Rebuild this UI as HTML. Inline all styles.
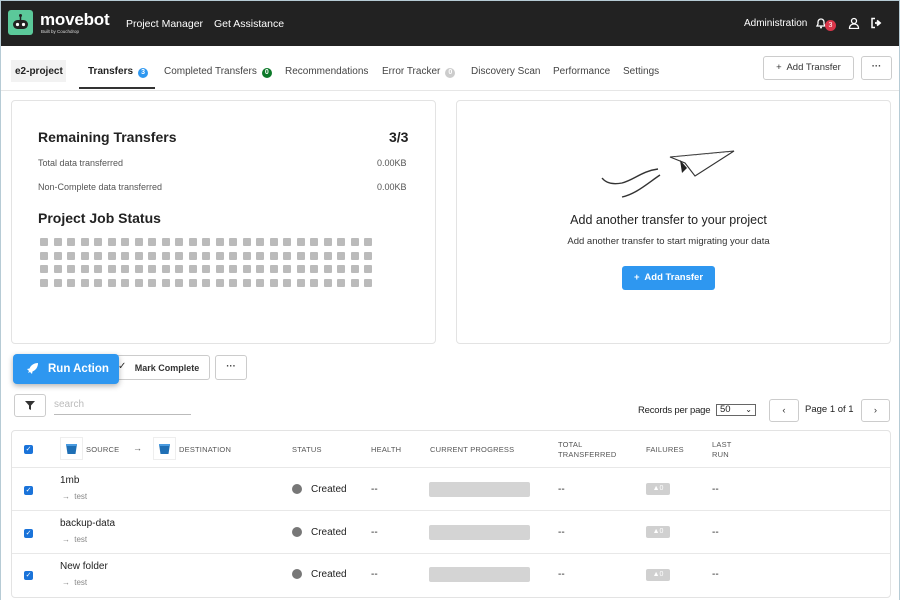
<!DOCTYPE html>
<html><head><style>
*{box-sizing:border-box;margin:0;padding:0}
body{width:900px;height:600px;overflow:hidden;background:#fff;font-family:"Liberation Sans",Arial,sans-serif;position:relative;color:#222}
.a{position:absolute;white-space:nowrap}
.frame{left:0;top:0;width:900px;height:600px;border:1px solid #b6cbd5;border-bottom:none}
.hdr{left:1px;top:1px;width:898px;height:45px;background:#222}
.w{color:#fff;font-size:10.5px}
.tab{font-size:10px;color:#444;top:66px}
.badge{display:inline-block;width:10px;height:10px;border-radius:5px;font-size:7px;color:#fff;text-align:center;line-height:10px;font-weight:bold;vertical-align:0px;margin-left:5px}
.card{border:1px solid #e3e3e3;border-radius:4px;background:#fff}
.btn{border:1px solid #ccc;border-radius:3px;background:#fff;font-size:9.5px;color:#333;text-align:center}
.sq{width:8px;height:8px;background:#bbb;border-radius:1px}
.th{font-size:7.5px;color:#555;letter-spacing:.2px}
.cb{width:9px;height:9px;background:#1a73d9;border-radius:2px;color:#fff;font-size:7px;line-height:9px;text-align:center}
.bar{width:101px;height:15px;background:#d4d4d4;border-radius:2px}
.fail{width:24px;height:12px;background:#d0d0d0;border-radius:2px;color:#fff;font-size:7px;text-align:center;line-height:12px}
.dot{width:10px;height:10px;border-radius:5px;background:#777}
</style></head><body>
<div class="a frame"></div>
<div class="a hdr"></div>
<div class="a" style="left:8px;top:10px;width:25px;height:25px;background:#5bc99a;border-radius:3px"></div>
<svg class="a" style="left:8px;top:10px" width="25" height="25"><rect x="5" y="10" width="15" height="9" rx="4.5" fill="#222"/><circle cx="9.5" cy="14.5" r="1.6" fill="#fff"/><circle cx="15.5" cy="14.5" r="1.6" fill="#fff"/><line x1="12.5" y1="6" x2="12.5" y2="10" stroke="#222" stroke-width="1.5"/><circle cx="12.5" cy="5.5" r="1.5" fill="#222"/></svg>
<div class="a" style="left:40px;top:10px;color:#fff;font-size:17px;font-weight:bold;letter-spacing:-.2px">movebot</div>
<div class="a" style="left:41px;top:29px;color:#ddd;font-size:4.5px">Built by Couchdrop</div>
<div class="a w" style="left:126px;top:18px">Project Manager</div>
<div class="a w" style="left:214px;top:18px">Get Assistance</div>
<div class="a w" style="left:744px;top:18px;font-size:10px">Administration</div>
<svg class="a" style="left:815px;top:17px" width="12" height="12"><path d="M2 9h8l-1-2V5a3 3 0 0 0-6 0v2z" fill="none" stroke="#fff" stroke-width="1.3"/><circle cx="6" cy="10.5" r="1" fill="#fff"/></svg>
<div class="a" style="left:825px;top:20px;width:11px;height:11px;border-radius:6px;background:#d9364a;color:#fff;font-size:7px;text-align:center;line-height:11px">3</div>
<svg class="a" style="left:848px;top:17px" width="12" height="12"><circle cx="6" cy="4" r="2.5" fill="none" stroke="#fff" stroke-width="1.3"/><path d="M1.5 11.5c0-3 2-4.5 4.5-4.5s4.5 1.5 4.5 4.5z" fill="none" stroke="#fff" stroke-width="1.3"/></svg>
<svg class="a" style="left:870px;top:17px" width="12" height="12"><path d="M5 1.5H2v9h3" fill="none" stroke="#fff" stroke-width="1.5"/><path d="M5 6h4M7 3.5 10 6 7 8.5" fill="none" stroke="#fff" stroke-width="1.8"/></svg>

<div class="a" style="left:11px;top:60px;width:55px;height:22px;background:#f2f2f2"></div>
<div class="a" style="left:15px;top:66px;font-size:10px;font-weight:bold">e2-project</div>
<div class="a tab" style="left:88px;font-weight:bold;color:#222">Transfers<span class="badge" style="background:#2e97f0">3</span></div>
<div class="a" style="left:79px;top:87px;width:76px;height:2px;background:#333"></div>
<div class="a tab" style="left:164px">Completed Transfers<span class="badge" style="background:#0d7a2a">0</span></div>
<div class="a tab" style="left:285px">Recommendations</div>
<div class="a tab" style="left:382px">Error Tracker<span class="badge" style="background:#ccc">0</span></div>
<div class="a tab" style="left:471px">Discovery Scan</div>
<div class="a tab" style="left:553px">Performance</div>
<div class="a tab" style="left:623px">Settings</div>
<div class="a btn" style="left:763px;top:56px;width:91px;height:24px;line-height:22px">+&nbsp; Add Transfer</div>
<div class="a btn" style="left:861px;top:56px;width:31px;height:24px;line-height:20px;font-weight:bold">···</div>
<div class="a" style="left:1px;top:90px;width:898px;height:1px;background:#e6e6e6"></div>

<div class="a card" style="left:11px;top:100px;width:425px;height:244px"></div>
<div class="a" style="left:38px;top:129px;font-size:14px;font-weight:bold">Remaining Transfers</div>
<div class="a" style="left:389px;top:129px;font-size:14px;font-weight:bold">3/3</div>
<div class="a" style="left:38px;top:158px;font-size:9px;color:#555">Total data transferred</div>
<div class="a" style="left:377px;top:158px;font-size:9px;color:#555">0.00KB</div>
<div class="a" style="left:38px;top:182px;font-size:9px;color:#555">Non-Complete data transferred</div>
<div class="a" style="left:377px;top:182px;font-size:9px;color:#555">0.00KB</div>
<div class="a" style="left:38px;top:210px;font-size:14px;font-weight:bold">Project Job Status</div>
<div class="a" style="left:40px;top:238px;width:340px;display:grid;grid-template-columns:repeat(25,8px);column-gap:5.5px;row-gap:5.5px">
<div class="sq"></div><div class="sq"></div><div class="sq"></div><div class="sq"></div><div class="sq"></div><div class="sq"></div><div class="sq"></div><div class="sq"></div><div class="sq"></div><div class="sq"></div><div class="sq"></div><div class="sq"></div><div class="sq"></div><div class="sq"></div><div class="sq"></div><div class="sq"></div><div class="sq"></div><div class="sq"></div><div class="sq"></div><div class="sq"></div><div class="sq"></div><div class="sq"></div><div class="sq"></div><div class="sq"></div><div class="sq"></div>
<div class="sq"></div><div class="sq"></div><div class="sq"></div><div class="sq"></div><div class="sq"></div><div class="sq"></div><div class="sq"></div><div class="sq"></div><div class="sq"></div><div class="sq"></div><div class="sq"></div><div class="sq"></div><div class="sq"></div><div class="sq"></div><div class="sq"></div><div class="sq"></div><div class="sq"></div><div class="sq"></div><div class="sq"></div><div class="sq"></div><div class="sq"></div><div class="sq"></div><div class="sq"></div><div class="sq"></div><div class="sq"></div>
<div class="sq"></div><div class="sq"></div><div class="sq"></div><div class="sq"></div><div class="sq"></div><div class="sq"></div><div class="sq"></div><div class="sq"></div><div class="sq"></div><div class="sq"></div><div class="sq"></div><div class="sq"></div><div class="sq"></div><div class="sq"></div><div class="sq"></div><div class="sq"></div><div class="sq"></div><div class="sq"></div><div class="sq"></div><div class="sq"></div><div class="sq"></div><div class="sq"></div><div class="sq"></div><div class="sq"></div><div class="sq"></div>
<div class="sq"></div><div class="sq"></div><div class="sq"></div><div class="sq"></div><div class="sq"></div><div class="sq"></div><div class="sq"></div><div class="sq"></div><div class="sq"></div><div class="sq"></div><div class="sq"></div><div class="sq"></div><div class="sq"></div><div class="sq"></div><div class="sq"></div><div class="sq"></div><div class="sq"></div><div class="sq"></div><div class="sq"></div><div class="sq"></div><div class="sq"></div><div class="sq"></div><div class="sq"></div><div class="sq"></div><div class="sq"></div>
</div>

<div class="a card" style="left:456px;top:100px;width:435px;height:244px"></div>
<svg class="a" style="left:600px;top:145px" width="140" height="60"><path d="M2 33c4 5 10 7 20 5 12-3 20-12 36-14" fill="none" stroke="#333" stroke-width="1.4"/><path d="M22 52c14-3 26-14 38-22" fill="none" stroke="#333" stroke-width="1.4"/><path d="M70 12 134 6 95 31 85 18z M70 12 85 18" fill="none" stroke="#333" stroke-width="1.1"/><path d="M80 15l2 13 5-5z" fill="#222"/><path d="M75 12 130 7" stroke="#999" stroke-width=".6" stroke-dasharray="2 2"/></svg>
<div class="a" style="left:456px;top:213px;width:425px;text-align:center;font-size:12.5px;color:#222">Add another transfer to your project</div>
<div class="a" style="left:456px;top:236px;width:425px;text-align:center;font-size:9.5px;color:#333">Add another transfer to start migrating your data</div>
<div class="a" style="left:622px;top:266px;width:93px;height:24px;background:#2e97f0;border-radius:3px;color:#fff;font-size:9.5px;font-weight:bold;text-align:center;line-height:24px">+&nbsp; Add Transfer</div>

<div class="a btn" style="left:112px;top:355px;width:98px;height:25px;line-height:24px;font-weight:bold;font-size:9px;padding-left:12px">Mark Complete</div>
<div class="a" style="left:118px;top:361px;font-size:10px;color:#333">✓</div>
<div class="a btn" style="left:215px;top:355px;width:32px;height:25px;line-height:21px;font-weight:bold">···</div>
<div class="a" style="left:13px;top:354px;width:106px;height:30px;background:#2e97f0;border-radius:4px;box-shadow:0 2px 6px rgba(0,0,0,.3);color:#fff;font-size:11.5px;font-weight:bold;line-height:30px;padding-left:35px">Run Action</div>
<svg class="a" style="left:26px;top:362px" width="13" height="13"><path d="M12 1C8 1 5 3 3.5 6.5L1 7l2 2-1 2 2-1 2 2 .5-2.5C10 8 12 5 12 1z" fill="#fff"/></svg>

<div class="a btn" style="left:14px;top:394px;width:32px;height:23px"></div>
<svg class="a" style="left:25px;top:401px" width="10" height="9"><path d="M0 0h10L6 4.5V9L4 8V4.5z" fill="#333"/></svg>
<div class="a" style="left:54px;top:399px;font-size:10px;color:#bbb">search</div>
<div class="a" style="left:54px;top:414px;width:137px;height:1px;background:#bbb"></div>
<div class="a" style="left:638px;top:405px;font-size:9.5px;color:#222;letter-spacing:-.2px">Records per page</div>
<div class="a" style="left:716px;top:404px;width:40px;height:12px;border:1px solid #666;font-size:9.5px;line-height:10px;padding-left:3px">50<span style="position:absolute;right:3px;top:0;font-size:8px">⌄</span></div>
<div class="a btn" style="left:769px;top:399px;width:30px;height:23px;line-height:22px">‹</div>
<div class="a" style="left:805px;top:404px;font-size:9.5px;color:#222">Page 1 of 1</div>
<div class="a btn" style="left:861px;top:399px;width:29px;height:23px;line-height:22px">›</div>

<div class="a card" style="left:11px;top:430px;width:880px;height:168px"></div>
<div class="a" style="left:12px;top:467px;width:878px;height:1px;background:#e8e8e8"></div>
<div class="a" style="left:12px;top:510px;width:878px;height:1px;background:#e8e8e8"></div>
<div class="a" style="left:12px;top:553px;width:878px;height:1px;background:#e8e8e8"></div>
<div class="a cb" style="left:24px;top:445px">✓</div>
<div class="a" style="left:60px;top:437px;width:23px;height:23px;border:1px solid #eee"></div>
<svg class="a" style="left:65px;top:442px" width="13" height="13"><path d="M1 2h11l-1.5 10h-8z" fill="#1f6fb5"/><rect x="1" y="2" width="11" height="2" fill="#4a9be0"/></svg>
<div class="a th" style="left:86px;top:445px">SOURCE</div>
<div class="a" style="left:133px;top:443px;font-size:9px;color:#555">→</div>
<div class="a" style="left:153px;top:437px;width:23px;height:23px;border:1px solid #eee"></div>
<svg class="a" style="left:158px;top:442px" width="13" height="13"><path d="M1 2h11l-1.5 10h-8z" fill="#1f6fb5"/><rect x="1" y="2" width="11" height="2" fill="#4a9be0"/></svg>
<div class="a th" style="left:179px;top:445px">DESTINATION</div>
<div class="a th" style="left:292px;top:445px">STATUS</div>
<div class="a th" style="left:371px;top:445px">HEALTH</div>
<div class="a th" style="left:430px;top:445px">CURRENT PROGRESS</div>
<div class="a th" style="left:558px;top:440px;line-height:10px">TOTAL<br>TRANSFERRED</div>
<div class="a th" style="left:646px;top:445px">FAILURES</div>
<div class="a th" style="left:712px;top:440px;line-height:10px">LAST<br>RUN</div>

<div class="a cb" style="left:24px;top:486px">✓</div>
<div class="a" style="left:60px;top:475px;font-size:10px">1mb</div>
<div class="a" style="left:62px;top:492px;font-size:8px;color:#888">→ <span style="margin-left:2px">test</span></div>
<div class="a dot" style="left:292px;top:484px"></div>
<div class="a" style="left:311px;top:484px;font-size:10px">Created</div>
<div class="a" style="left:371px;top:484px;font-size:10px">--</div>
<div class="a bar" style="left:429px;top:482px"></div>
<div class="a" style="left:558px;top:484px;font-size:10px">--</div>
<div class="a fail" style="left:646px;top:483px">▲0</div>
<div class="a" style="left:712px;top:484px;font-size:10px">--</div>

<div class="a cb" style="left:24px;top:529px">✓</div>
<div class="a" style="left:60px;top:518px;font-size:10px">backup-data</div>
<div class="a" style="left:62px;top:535px;font-size:8px;color:#888">→ <span style="margin-left:2px">test</span></div>
<div class="a dot" style="left:292px;top:527px"></div>
<div class="a" style="left:311px;top:527px;font-size:10px">Created</div>
<div class="a" style="left:371px;top:527px;font-size:10px">--</div>
<div class="a bar" style="left:429px;top:525px"></div>
<div class="a" style="left:558px;top:527px;font-size:10px">--</div>
<div class="a fail" style="left:646px;top:526px">▲0</div>
<div class="a" style="left:712px;top:527px;font-size:10px">--</div>

<div class="a cb" style="left:24px;top:571px">✓</div>
<div class="a" style="left:60px;top:561px;font-size:10px">New folder</div>
<div class="a" style="left:62px;top:578px;font-size:8px;color:#888">→ <span style="margin-left:2px">test</span></div>
<div class="a dot" style="left:292px;top:569px"></div>
<div class="a" style="left:311px;top:569px;font-size:10px">Created</div>
<div class="a" style="left:371px;top:569px;font-size:10px">--</div>
<div class="a bar" style="left:429px;top:567px"></div>
<div class="a" style="left:558px;top:569px;font-size:10px">--</div>
<div class="a fail" style="left:646px;top:569px">▲0</div>
<div class="a" style="left:712px;top:569px;font-size:10px">--</div>
</body></html>
